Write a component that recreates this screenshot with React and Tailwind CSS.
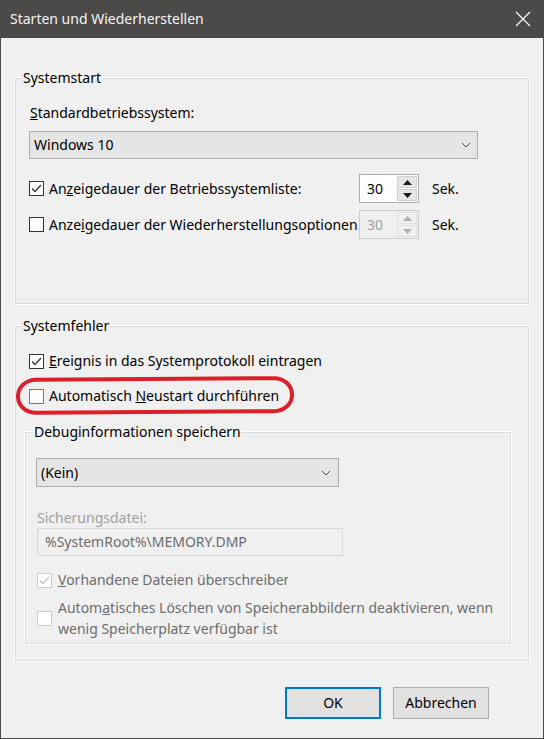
import React from "react";

const font = { fontFamily: '"Noto Sans", "Liberation Sans", sans-serif' };

const CheckBox = ({ checked, disabled, focus }) => {
    let border = "border-[#333333]";
    if (focus) border = "border-[#4a86b4]";
    if (disabled) border = "border-[#cccccc]";
    return (
        <span className={"w-[15px] h-[15px] shrink-0 border bg-white flex items-center justify-center " + border}>
            {checked && (
                <svg width="11" height="9" viewBox="0 0 11 9">
                    <polyline
                        points="1,4.5 4,7.5 10,1"
                        fill="none"
                        stroke={disabled ? "#c4c4c4" : "#333333"}
                        strokeWidth="1.3"
                    />
                </svg>
            )}
        </span>
    );
};

const Chevron = () => (
    <svg width="10" height="6" viewBox="0 0 10 6">
        <polyline points="1,1 5,5 9,1" fill="none" stroke="#444" strokeWidth="1" />
    </svg>
);

const Spinner = ({ disabled }) => (
    <div className={"flex h-[29px] w-[60px] border " + (disabled ? "border-[#cccccc] bg-[#f0f0f0]" : "border-[#adadad] bg-white")}>
        <div className={"flex-1 flex items-center pl-[7px] " + (disabled ? "text-[#a0a0a0]" : "text-black")}>30</div>
        <div className="w-[20px] my-[1px] mr-[1px] flex flex-col gap-[1px]">
            <div className={"flex-1 flex items-center justify-center border " + (disabled ? "border-[#e0e0e0] bg-[#f0f0f0]" : "border-[#d0d0d0] bg-[#e6e6e6]")}>
                <svg width="9" height="5" viewBox="0 0 9 5">
                    <polygon points="0,5 4.5,0 9,5" fill={disabled ? "#b0b0b0" : "#1a1a1a"} />
                </svg>
            </div>
            <div className={"flex-1 flex items-center justify-center border " + (disabled ? "border-[#e0e0e0] bg-[#f0f0f0]" : "border-[#d0d0d0] bg-[#e6e6e6]")}>
                <svg width="9" height="5" viewBox="0 0 9 5">
                    <polygon points="0,0 9,0 4.5,5" fill={disabled ? "#b0b0b0" : "#1a1a1a"} />
                </svg>
            </div>
        </div>
    </div>
);

const Group = ({ title, className, children }) => (
    <fieldset className={"border border-[#dcdcdc] shadow-[0_0_0_1px_#ffffff] " + className}>
        <legend className="-ml-[7px] px-[1px] leading-[20px]">{title}</legend>
        {children}
    </fieldset>
);

const App = () => {
    return (
        <div
        className="w-[544px] h-[739px] bg-[#f0f0f0] border border-t-0 border-[#4b4a48] flex flex-col text-[14px] leading-[20px] text-black"
        style={font}
        >
            {/* title bar */}
            <div className="h-[38px] -mx-[1px] bg-[#4b4a48] flex items-center justify-between pl-[10px] pr-[13px] text-white">
                <span className="text-[14px] text-[#f4f4f4]">Starten und Wiederherstellen</span>
                <svg width="16" height="16" viewBox="0 0 16 16">
                    <path d="M1 1 L15 15 M15 1 L1 15" stroke="#ffffff" strokeWidth="1.2" />
                </svg>
            </div>

            <div className="px-[14px]">
                <Group title="Systemstart" className="mt-[30px] pl-[13px] pb-[64px]">
                    <div className="pt-[15px] pl-[1px]"><u>S</u>tandardbetriebssystem:</div>
                    <div className="mt-[8px] w-[449px] h-[28px] bg-[#e5e5e5] border border-[#adadad] flex items-center justify-between pl-[4px] pr-[6px]">
                        <span>Windows 10</span>
                        <Chevron />
                    </div>

                    <div className="mt-[15px] flex items-center">
                        <div className="w-[330px] flex items-center gap-[5px] overflow-hidden whitespace-nowrap">
                            <CheckBox checked />
                            <span>An<u>z</u>eigedauer der Betriebssystemliste:</span>
                        </div>
                        <Spinner />
                        <span className="ml-[13px]">Sek.</span>
                    </div>
                    <div className="mt-[7px] flex items-center">
                        <div className="w-[330px] flex items-center gap-[5px] overflow-hidden whitespace-nowrap">
                            <CheckBox />
                            <span>Anze<u>i</u>gedauer der Wiederherstellungsoptionen</span>
                        </div>
                        <Spinner disabled />
                        <span className="ml-[13px]">Sek.</span>
                    </div>
                </Group>

                <Group title="Systemfehler" className="mt-[12px] pl-[13px] pr-[17px] pb-[16px]">
                    <div className="pt-[15px] flex items-center gap-[5px]">
                        <CheckBox checked />
                        <span><u>E</u>reignis in das Systemprotokoll eintragen</span>
                    </div>
                    <div className="relative mt-[15px] flex items-center gap-[5px]">
                        <CheckBox focus />
                        <span>Automatisch <u>N</u>eustart durchführen</span>
                        <div className="absolute -left-[13px] -top-[9px] w-[278px] h-[37px] border-[4px] border-[#d9202b] rounded-[20px/18px] -rotate-[0.4deg]" />
                    </div>

                    <fieldset className="mt-[16px] -ml-[4px] border border-[#dcdcdc] shadow-[0_0_0_1px_#ffffff] pl-[10px] pb-[4px]">
                        <legend className="-ml-[3px] px-[1px] leading-[20px]">Debuginformationen speichern</legend>
                        <div className="mt-[16px] w-[303px] h-[29px] bg-[#e5e5e5] border border-[#adadad] flex items-center justify-between pl-[4px] pr-[7px]">
                            <span>(Kein)</span>
                            <Chevron />
                        </div>
                        <div className="mt-[21px] pl-[1px] text-[#a0a0a0]">Sicherungsdatei:</div>
                        <div className="ml-[1px] w-[306px] h-[28px] border border-[#d9d9d9] bg-[#f0f0f0] flex items-center pl-[7px] text-[#6d6d6d]">
                            %SystemRoot%\MEMORY.DMP
                        </div>
                        <div className="mt-[14px] ml-[1px] flex items-center gap-[6px]">
                            <CheckBox checked disabled />
                            <span className="w-[230px] overflow-hidden whitespace-nowrap text-[#6d6d6d]"><u>V</u>orhandene Dateien überschreiben</span>
                        </div>
                        <div className="mt-[7px] ml-[1px] flex items-center gap-[6px] leading-[21px] text-[#6d6d6d]">
                            <CheckBox disabled />
                            <span>Autom<u>a</u>tisches Löschen von Speicherabbildern deaktivieren, wenn<br />wenig Speicherplatz verfügbar ist</span>
                        </div>
                    </fieldset>
                </Group>
            </div>

            <div className="mt-[26px] flex justify-end gap-[12px] pr-[54px]">
                <button className="w-[96px] h-[32px] bg-[#e1e1e1] border-2 border-[#0078d7]">OK</button>
                <button className="w-[96px] h-[32px] bg-[#e1e1e1] border border-[#adadad]">Abbrechen</button>
            </div>
        </div>
    );
};

export default App;
